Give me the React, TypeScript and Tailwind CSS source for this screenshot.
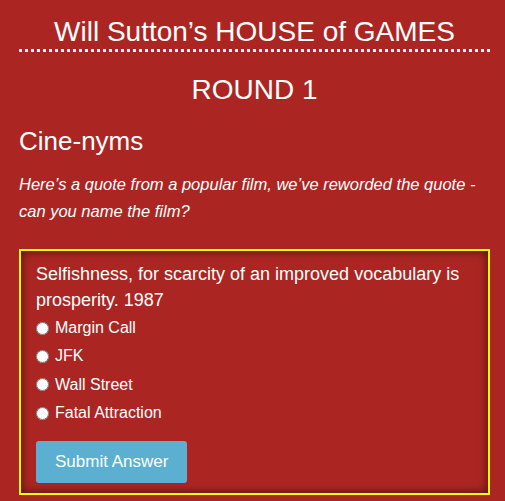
export default function App() {
  const options = ["Margin Call", "JFK", "Wall Street", "Fatal Attraction"];

  return (
    <div className="min-h-[501px] w-full bg-[#ab2622] pl-[19px] pr-[15px] pt-[16px] text-white font-['Liberation_Sans',Arial,sans-serif]">
      <h1 className="border-b-[3px] border-dotted border-white pb-[1px] text-center text-[28px] leading-[32px]">
        Will Sutton’s HOUSE of GAMES
      </h1>
      <h2 className="mt-[22px] text-center text-[28px] leading-[32px]">ROUND 1</h2>
      <h3 className="mt-[20px] text-[26px] leading-[30px]">Cine-nyms</h3>
      <p className="mt-[15px] text-[16.5px] italic leading-[27px]">
        Here’s a quote from a popular film, we’ve reworded the quote - can you name the film?
      </p>
      <div className="mt-[24px] border-2 border-[#ffff00] px-[15px] pt-[10px] pb-[10px] shadow-[inset_0_0_10px_rgba(0,0,0,0.6)]">
        <p className="text-[18px] leading-[26px]">
          Selfishness, for scarcity of an improved vocabulary is prosperity. 1987
        </p>
        <div className="mt-[1px] flex flex-col">
          {options.map((o) => (
            <label key={o} className="flex h-[28.3px] items-center gap-[6px] text-[16px]">
              <input type="radio" name="answer" className="m-0 h-[13px] w-[13px]" />
              {o}
            </label>
          ))}
        </div>
        <button className="mt-[14px] rounded-[3px] bg-[#5bafd1] px-[19px] py-[10px] text-[17px] leading-[22px] text-white">
          Submit Answer
        </button>
      </div>
    </div>
  );
}
